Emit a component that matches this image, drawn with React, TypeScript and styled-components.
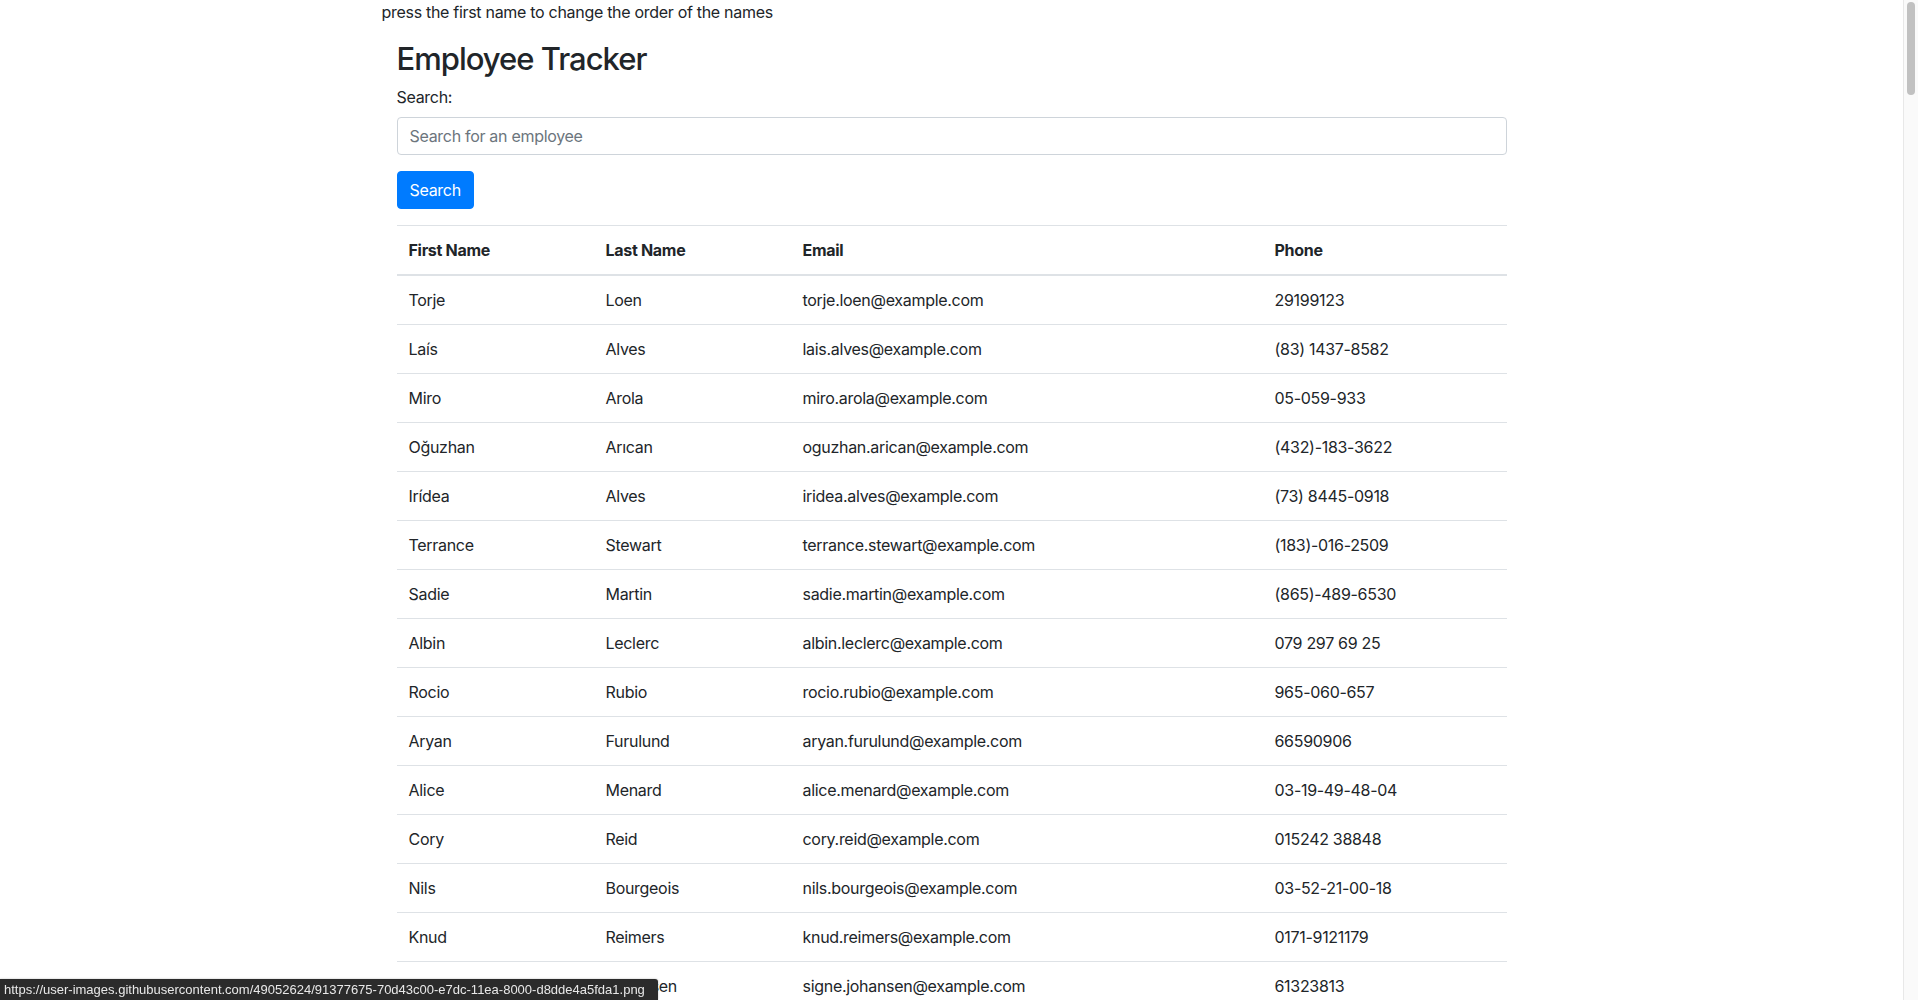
import styled, { createGlobalStyle } from "styled-components";
import { useState } from "react";

const GlobalStyle = createGlobalStyle`
  html, body {
    margin: 0;
    padding: 0;
    height: 100%;
    overflow: hidden;
    background: #fff;
  }
  body {
    font-family: Inter, "Liberation Sans", Arial, sans-serif;
    font-size: 16px;
    line-height: 1.5;
    letter-spacing: -0.3px;
    color: #212529;
  }
  * { box-sizing: border-box; }
`;

const PAGE = styled.div`
  display: flex;
  height: 100vh;
  overflow: hidden;
`;

const MAIN = styled.div`
  flex: 1;
  overflow: hidden;
`;

const Wrapper = styled.div`
  width: 1140px;
  margin: 0 auto;
`;

const Hint = styled.p`
  margin: 0;
  line-height: 24px;
`;

const Content = styled.div`
  padding: 16px 15px 0;
`;

const Title = styled.h2`
  margin: 0 0 8px;
  font-size: 31px;
  font-weight: 500;
  line-height: 1.2;
  letter-spacing: -1px;
`;

const FormGroup = styled.div`
  margin-bottom: 16px;
`;

const Label = styled.label`
  display: block;
  margin-bottom: 8px;
`;

const Input = styled.input`
  display: block;
  width: 100%;
  height: 38px;
  padding: 6px 12px;
  font: inherit;
  letter-spacing: inherit;
  color: #495057;
  border: 1px solid #ced4da;
  border-radius: 4px;
  background: #fff;
  &::placeholder {
    color: #6c757d;
  }
`;

const Button = styled.button`
  display: block;
  height: 38px;
  padding: 6px 12px;
  font: inherit;
  letter-spacing: inherit;
  color: #fff;
  background: #007bff;
  border: 1px solid #007bff;
  border-radius: 4px;
  margin-bottom: 16px;
`;

const Table = styled.table`
  width: 100%;
  border-collapse: collapse;
  table-layout: fixed;
`;

const TH = styled.th<{ $w: number }>`
  width: ${(p) => p.$w}px;
  text-align: left;
  font-weight: 700;
  padding: 12px;
  vertical-align: bottom;
  border-top: 1px solid #dee2e6;
  border-bottom: 2px solid #dee2e6;
  cursor: pointer;
`;

const TD = styled.td`
  padding: 12px;
  border-top: 1px solid #dee2e6;
  white-space: nowrap;
`;

const Track = styled.div`
  width: 15px;
  flex: none;
  background: #fafafa;
  border-left: 1px solid #e8e8e8;
  padding: 2px 0 0 3px;
`;

const Thumb = styled.div`
  width: 8px;
  height: 93px;
  border-radius: 4px;
  background: #c1c1c1;
`;

const StatusBubble = styled.div`
  position: fixed;
  left: 0;
  bottom: 0;
  width: 658px;
  height: 21px;
  padding: 0 4px;
  background: #2b2b2b;
  color: #e8e8e8;
  font-family: "Liberation Sans", Arial, sans-serif;
  font-size: 13px;
  letter-spacing: 0;
  line-height: 21px;
  white-space: nowrap;
  overflow: hidden;
  border-top-right-radius: 3px;
  box-shadow: 0 0 2px rgba(0, 0, 0, 0.3);
`;

type Employee = { first: string; last: string; email: string; phone: string };

const employees: Employee[] = [
  { first: "Torje", last: "Loen", email: "torje.loen@example.com", phone: "29199123" },
  { first: "Laís", last: "Alves", email: "lais.alves@example.com", phone: "(83) 1437-8582" },
  { first: "Miro", last: "Arola", email: "miro.arola@example.com", phone: "05-059-933" },
  { first: "Oğuzhan", last: "Arıcan", email: "oguzhan.arican@example.com", phone: "(432)-183-3622" },
  { first: "Irídea", last: "Alves", email: "iridea.alves@example.com", phone: "(73) 8445-0918" },
  { first: "Terrance", last: "Stewart", email: "terrance.stewart@example.com", phone: "(183)-016-2509" },
  { first: "Sadie", last: "Martin", email: "sadie.martin@example.com", phone: "(865)-489-6530" },
  { first: "Albin", last: "Leclerc", email: "albin.leclerc@example.com", phone: "079 297 69 25" },
  { first: "Rocio", last: "Rubio", email: "rocio.rubio@example.com", phone: "965-060-657" },
  { first: "Aryan", last: "Furulund", email: "aryan.furulund@example.com", phone: "66590906" },
  { first: "Alice", last: "Menard", email: "alice.menard@example.com", phone: "03-19-49-48-04" },
  { first: "Cory", last: "Reid", email: "cory.reid@example.com", phone: "015242 38848" },
  { first: "Nils", last: "Bourgeois", email: "nils.bourgeois@example.com", phone: "03-52-21-00-18" },
  { first: "Knud", last: "Reimers", email: "knud.reimers@example.com", phone: "0171-9121179" },
  { first: "Signe", last: "Johansen", email: "signe.johansen@example.com", phone: "61323813" },
];

const App = () => {
  const [query, setQuery] = useState("");
  const [asc, setAsc] = useState<boolean | null>(null);

  let rows = employees.filter((e) =>
    `${e.first} ${e.last}`.toLowerCase().includes(query.toLowerCase())
  );
  if (asc !== null) {
    rows = [...rows].sort((a, b) =>
      asc ? a.first.localeCompare(b.first) : b.first.localeCompare(a.first)
    );
  }

  return (
    <>
      <GlobalStyle />
      <PAGE>
        <MAIN>
          <Wrapper>
            <Hint>press the first name to change the order of the names</Hint>
            <Content>
              <Title>Employee Tracker</Title>
              <FormGroup>
                <Label htmlFor="search">Search:</Label>
                <Input
                  id="search"
                  placeholder="Search for an employee"
                  value={query}
                  onChange={(e) => setQuery(e.target.value)}
                />
              </FormGroup>
              <Button type="button">Search</Button>
              <Table>
                <thead>
                  <tr>
                    <TH $w={197} onClick={() => setAsc(!asc)}>First Name</TH>
                    <TH $w={197}>Last Name</TH>
                    <TH $w={472}>Email</TH>
                    <TH $w={244}>Phone</TH>
                  </tr>
                </thead>
                <tbody>
                  {rows.map((e) => (
                    <tr key={e.email}>
                      <TD>{e.first}</TD>
                      <TD>{e.last}</TD>
                      <TD>{e.email}</TD>
                      <TD>{e.phone}</TD>
                    </tr>
                  ))}
                </tbody>
              </Table>
            </Content>
          </Wrapper>
        </MAIN>
        <Track>
          <Thumb />
        </Track>
      </PAGE>
      <StatusBubble>
        https://user-images.githubusercontent.com/49052624/91377675-70d43c00-e7dc-11ea-8000-d8dde4a5fda1.png
      </StatusBubble>
    </>
  );
};

export default App;
